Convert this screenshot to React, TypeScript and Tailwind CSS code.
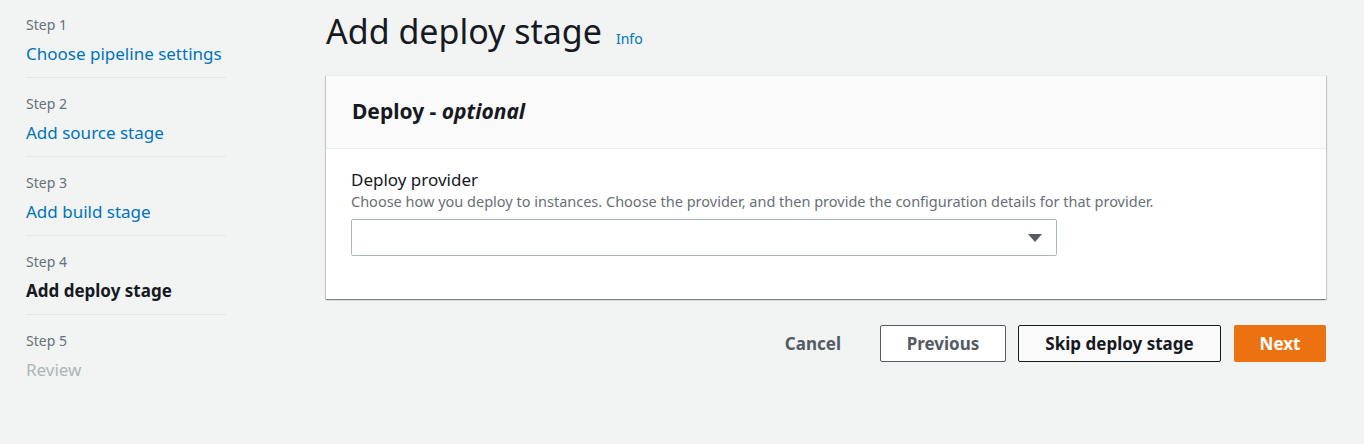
import React from "react";

const steps = [
  { step: "Step 1", label: "Choose pipeline settings", kind: "link" },
  { step: "Step 2", label: "Add source stage", kind: "link" },
  { step: "Step 3", label: "Add build stage", kind: "link" },
  { step: "Step 4", label: "Add deploy stage", kind: "active" },
  { step: "Step 5", label: "Review", kind: "disabled" },
];

export default function App() {
  return (
    <div
      className="w-[1364px] h-[444px] bg-[#f2f3f3] flex overflow-hidden"
      style={{ fontFamily: '"Noto Sans", "Open Sans", Arial, sans-serif' }}
    >
      <nav className="w-[300px] pl-[26px] pt-[14px] shrink-0">
        <ul className="w-[200px]">
          {steps.map((s, i) => (
            <li
              key={s.step}
              className={`${i < steps.length - 1 ? "border-b border-[#e4e6e6]" : ""} ${i === 0 ? "pb-[11px]" : "pt-[15px] pb-[11px]"}`}
            >
              <div className="text-[14px] leading-[22px] text-[#687078]">{s.step}</div>
              <div
                className={`text-[17px] leading-[24px] mt-[6px] ${
                  s.kind === "link"
                    ? "text-[#0073bb]"
                    : s.kind === "active"
                    ? "text-[#16191f] font-bold"
                    : "text-[#aab7b8]"
                }`}
              >
                {s.label}
              </div>
            </li>
          ))}
        </ul>
      </nav>
      <main className="flex-1 pl-[26px] pr-[38px]">
        <div className="flex items-baseline gap-[14px] h-[65px] pt-[9px]">
          <h1 className="text-[34px] leading-[44px] text-[#16191f] font-normal">Add deploy stage</h1>
          <a className="text-[14px] text-[#0073bb]">Info</a>
        </div>
        <section className="bg-white mt-[10px] shadow-[0_1px_1px_0_rgba(0,28,36,0.3),1px_1px_1px_0_rgba(0,28,36,0.15),-1px_1px_1px_0_rgba(0,28,36,0.15)] border-t border-[#eaeded]">
          <header className="bg-[#fafafa] border-b border-[#eaeded] h-[73px] flex items-center px-[26px]">
            <h2 className="text-[21px] font-bold text-[#16191f]">
              Deploy - <span className="italic">optional</span>
            </h2>
          </header>
          <div className="px-[25px] pt-[19px] pb-[43px]">
            <div className="text-[17px] leading-[24px] text-[#16191f]">Deploy provider</div>
            <div className="text-[14.5px] leading-[20px] text-[#687078] -mt-[1px]">
              Choose how you deploy to instances. Choose the provider, and then provide the configuration details for that provider.
            </div>
            <div className="mt-[8px] w-[706px] h-[37px] border border-[#aab7b8] rounded-[2px] flex items-center justify-end pr-[14px]">
              <svg width="14" height="10" viewBox="0 0 14 10">
                <polygon points="0,1 14,1 7,9" fill="#545b64" />
              </svg>
            </div>
          </div>
        </section>
        <div className="flex justify-end items-center mt-[26px]">
          <button className="h-[37px] px-[20px] text-[17px] font-bold text-[#545b64] mr-[19px]">Cancel</button>
          <button className="h-[37px] w-[126px] border border-[#545b64] rounded-[2px] bg-white text-[17px] font-bold text-[#545b64]">
            Previous
          </button>
          <button className="h-[37px] w-[203px] ml-[12px] border border-[#16191f] rounded-[2px] bg-[#fafafa] text-[17px] font-bold text-[#16191f]">
            Skip deploy stage
          </button>
          <button className="h-[37px] w-[92px] ml-[13px] rounded-[2px] bg-[#ec7211] text-[17px] font-bold text-white">
            Next
          </button>
        </div>
      </main>
    </div>
  );
}
